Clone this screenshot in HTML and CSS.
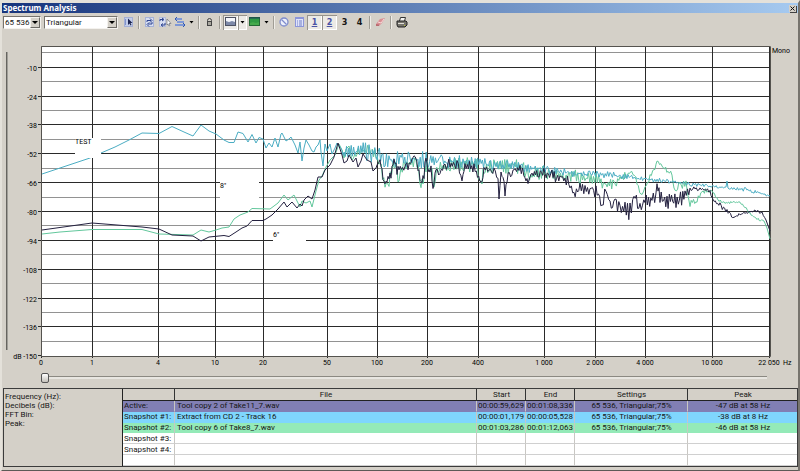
FILE: index.html
```html
<!DOCTYPE html>
<html lang="en">
<head>
<meta charset="utf-8">
<title>Spectrum Analysis</title>
<link rel="stylesheet" href="styles.css">
</head>
<body>
<main class="window">
  <header class="titlebar">
    <h1>Spectrum Analysis</h1>
    <button class="close" aria-label="Close"><svg viewBox="0 0 7 7"><path d="M1.5 1.5l4 4M5.5 1.5l-4 4"/></svg></button>
  </header>

  <div class="toolbar">
    <span class="combo combo-size">
      <select aria-label="FFT size"><option>65 536</option></select>
      <svg class="combo-arrow" viewBox="0 0 8 9"><path d="M1 3h6L4 6z"/></svg>
    </span>
    <span class="combo combo-window">
      <select aria-label="Smoothing window"><option>Triangular</option></select>
      <svg class="combo-arrow" viewBox="0 0 8 9"><path d="M1 3h6L4 6z"/></svg>
    </span>
    <button class="tool" aria-label="Settings"><svg viewBox="0 0 15 14"><rect x="3.5" y="2.5" width="8" height="9" fill="#c3cdea" stroke="#a3afd6"/><path d="M7 3.500v6.500l1.500-1.500 1 2 1-.5-1-2h2z" fill="#1b2450"/><path d="M4.500 4v6" stroke="#8093cc"/></svg></button>
    <span class="sep"></span>
    <button class="tool" aria-label="Refresh"><svg viewBox="0 0 15 14"><rect x="3.500" y="2.500" width="8" height="9" fill="#d7def2" stroke="#a6b2d8"/><path d="M5 7V5.500h4M8 3.500l2 2-2 2M10 7v2H6M7 7.500l-2 2 2 2" fill="none" stroke="#2c438f"/></svg></button>
    <button class="tool" aria-label="Refresh selection"><svg viewBox="0 0 15 14"><rect x="2.500" y="2.500" width="6" height="9" fill="#d7def2" stroke="#b4bddb"/><path d="M3 6V4.500h3M5 3l2 1.500L5 6M8 8v2H5M6 8.500L4 10l2 1.500" fill="none" stroke="#2c438f"/><path d="M10 4v6l1-1 1 2 1-.5-1-2h2z" fill="#fff" stroke="#59606f" stroke-width=".6"/></svg></button>
    <button class="tool" aria-label="Display range"><svg viewBox="0 0 15 14"><path d="M3 4h7M5 7h7M3 10h9" stroke="#7e98d6" stroke-width="2"/><path d="M5 2L3 4l2 2M11 8l2 2-2 2" fill="none" stroke="#2f56ad"/></svg></button>
    <button class="drop" aria-label="Display range options"><svg viewBox="0 0 9 14"><path d="M2.500 6h4l-2 2.500z"/></svg></button>
    <span class="sep"></span>
    <button class="tool" aria-label="Hold peaks"><svg viewBox="0 0 15 14"><path d="M5.500 7V5.500q0-2 2-2t2 2V7" fill="none" stroke="#444"/><rect x="5.500" y="6.500" width="4" height="4" fill="#a9a79f" stroke="#444"/></svg></button>
    <span class="sep"></span>
    <button class="tool pressed" aria-label="Line graph" aria-pressed="true"><svg viewBox="0 0 15 14"><rect x="2.500" y="2.500" width="10" height="8" fill="#f4f6fb" stroke="#4d5263"/><path d="M3 6l3 1 3-1 3 1v3H3z" fill="#7d89a8"/></svg></button>
    <button class="drop pressed" aria-label="Graph type"><svg viewBox="0 0 9 14"><path d="M2.500 6h4l-2 2.500z"/></svg></button>
    <button class="tool" aria-label="Spectrogram"><svg viewBox="0 0 15 14"><rect x="2.500" y="2.500" width="10" height="8" fill="#2f9a43" stroke="#236a35"/><path d="M2 3h11" stroke="#20405e"/><path d="M3 8l3-1 3 1 3-1v3H3z" fill="#45aa4c"/></svg></button>
    <button class="drop" aria-label="Spectrogram options"><svg viewBox="0 0 9 14"><path d="M2.500 6h4l-2 2.500z"/></svg></button>
    <span class="sep"></span>
    <button class="tool" aria-label="Disable snapshots"><svg viewBox="0 0 15 14"><circle cx="7" cy="7" r="4" fill="#edf0fb" stroke="#7e8ccc" stroke-width="1.300"/><path d="M4.500 4.500l5 5" stroke="#7e8ccc" stroke-width="1.300"/></svg></button>
    <button class="tool" aria-label="Snapshot list"><svg viewBox="0 0 15 14"><rect x="3.500" y="2.500" width="8" height="9" fill="#dfe3fb" stroke="#8c96da"/><path d="M3 3.500h9" stroke="#8c96da"/><path d="M5 6h1M5 8h1M5 10h1M7 6h3M7 8h3M7 10h3" stroke="#7280c5"/></svg></button>
    <button class="tool digit pressed" aria-pressed="true">1</button>
    <button class="tool digit pressed" aria-pressed="true">2</button>
    <button class="tool digit">3</button>
    <button class="tool digit">4</button>
    <span class="sep"></span>
    <button class="tool" aria-label="Clear"><svg viewBox="0 0 15 14"><path d="M3 9l4-5 5-1-3 5-3 3H3z" fill="#d98f94"/><path d="M5 7l3 1 3-4" fill="none" stroke="#f7dada"/><path d="M3 9l3 .5V11H3z" fill="#b96a70"/></svg></button>
    <span class="sep"></span>
    <button class="tool" aria-label="Print"><svg viewBox="0 0 15 14"><path d="M5.500 6l1-3.500h5L10.500 6" fill="#f5f5f2" stroke="#333"/><path d="M3 6h9l1 1v3l-2 2H4l-1-2z" fill="#77756e" stroke="#222"/><path d="M4 8.500h6" stroke="#e0ded6"/><path d="M10 10.500h1" stroke="#b8c235"/></svg></button>
  </div>

  <svg class="chart" viewBox="2 31 796 340" role="img" aria-label="Spectrum, level in dB against frequency in Hz">
    <rect class="groove-shade" x="6" y="52" width="1" height="298"/>
    <rect class="groove-light" x="7" y="52" width="1" height="298"/>
    <rect class="plot" x="41" y="46" width="730" height="310"/>
    <g id="grid"></g>
    <g id="series"></g>
    <g class="notes">
      <rect x="75" y="138" width="26" height="20"/><text x="75" y="144">TEST</text>
      <rect x="220" y="177" width="39" height="21"/><text x="220" y="188">8"</text>
      <rect x="273" y="230" width="33" height="14"/><text x="273" y="237">6"</text>
    </g>
    <g id="labels" class="labels"></g>
    <text class="channel" x="772" y="53">Mono</text>
  </svg>

  <div class="position"><input type="range" min="0" max="100" value="0" aria-label="Position"></div>

  <section class="details">
    <ul class="readout">
      <li>Frequency (Hz):</li>
      <li>Decibels (dB):</li>
      <li>FFT Bin:</li>
      <li>Peak:</li>
    </ul>
    <div class="snapshots">
      <table>
        <colgroup><col class="c-name"><col><col class="c-time"><col class="c-time"><col class="c-settings"><col class="c-peak"></colgroup>
        <thead><tr><th></th><th>File</th><th>Start</th><th>End</th><th>Settings</th><th>Peak</th></tr></thead>
        <tbody>
          <tr class="active"><td>Active:</td><td>Tool copy 2 of Take11_7.wav</td><td>00:00:59,629</td><td>00:01:08,336</td><td>65 536, Triangular;75%</td><td>-47 dB at 58 Hz</td></tr>
          <tr class="snap1"><td>Snapshot #1:</td><td>Extract from CD 2 - Track 16</td><td>00:00:01,179</td><td>00:00:05,528</td><td>65 536, Triangular;75%</td><td>-38 dB at 8 Hz</td></tr>
          <tr class="snap2"><td>Snapshot #2:</td><td>Tool copy 6 of Take8_7.wav</td><td>00:01:03,286</td><td>00:01:12,063</td><td>65 536, Triangular;75%</td><td>-46 dB at 58 Hz</td></tr>
          <tr><td>Snapshot #3:</td><td></td><td></td><td></td><td></td><td></td></tr>
          <tr><td>Snapshot #4:</td><td></td><td></td><td></td><td></td><td></td></tr>
          <tr><td></td><td></td><td></td><td></td><td></td><td></td></tr>
        </tbody>
      </table>
    </div>
  </section>
</main>
<script src="chart.js"></script>
</body>
</html>
```
FILE: styles.css
```css
* { box-sizing: border-box; }

body {
  margin: 0;
  background: #d4d0c8;
  color: #161616;
  font: 8px/9px Roboto, "Liberation Sans", sans-serif;
}

button, select, input { font: inherit; color: inherit; margin: 0; }

.window {
  border-top: 3px solid #e4e1da;
  border-left: 2px solid #e4e1da;
  border-right: 2px solid #77746e;
  border-bottom: 2px solid #5c5a56;
}

.titlebar {
  display: flex;
  align-items: center;
  justify-content: space-between;
  height: 10px;
  padding: 0 2px 0 1px;
  background: linear-gradient(90deg, #16347c, #a6caf0);
}

h1 { margin: 0; font: bold 8px/10px "Noto Sans", "Liberation Sans", sans-serif; color: #fff; }

.close {
  width: 7px;
  height: 7px;
  padding: 0;
  border: 0;
  background: #d4d0c8;
  box-shadow: 1px 1px 0 #404040;
}
.close svg { display: block; stroke: #111; }

.toolbar { display: flex; align-items: center; height: 18px; padding-left: 1px; }

.combo {
  position: relative;
  height: 13px;
  border: 1px solid;
  border-color: #77746e #f4f2ee #f4f2ee #77746e;
  background: #fff;
}
.combo-size { width: 38px; margin-right: 3px; }
.combo-window { width: 74px; margin-right: 3px; }
.combo select {
  display: block;
  appearance: none;
  width: 100%;
  height: 11px;
  padding: 0 0 0 1px;
  border: 0;
  background: none;
}
.combo-arrow {
  position: absolute;
  top: 0;
  right: 0;
  width: 10px;
  height: 11px;
  background: #d4d0c8;
  border: 1px solid;
  border-color: #f4f2ee #6c6a65 #6c6a65 #f4f2ee;
  pointer-events: none;
}

.tool, .drop { width: 15px; height: 15px; padding: 0; border: 0; background: none; }
.drop { width: 9px; }
.tool svg, .drop svg { display: block; width: 100%; height: 14px; }
.pressed {
  background: #eceae6;
  box-shadow: inset 1px 1px 0 #96938c, inset -1px -1px 0 #fff;
}
.digit { font: bold 9px/14px "DejaVu Sans Condensed", "Liberation Sans", sans-serif; }
.digit.pressed { color: #4b53a5; text-decoration: underline; }
.sep { width: 2px; height: 13px; margin: 0 2px; border-left: 1px solid #a09d95; border-right: 1px solid #efede8; }

.chart { display: block; width: 100%; height: auto; }
.groove-shade { fill: #66645f; }
.groove-light { fill: #a09e98; }
.plot { fill: #fff; }
.major { stroke: #2a2a2a; }
.minor { stroke: #929292; }
.frame { stroke: #55534f; }
.series { fill: none; stroke-width: 1; stroke-linejoin: round; }
.series-snap1 { stroke: #4badc3; }
.series-snap2 { stroke: #62c79c; }
.series-active { stroke: #242140; }
.notes rect { fill: #fff; }
.notes text, .labels text, .channel { font-size: 7px; }

.position { display: flex; height: 12px; padding: 0 31px 0 39px; }
.position input { appearance: none; width: 100%; height: 12px; background: none; }
.position input::-webkit-slider-runnable-track {
  height: 3px;
  background: #e8e6e1;
  border-top: 1px solid #8b8982;
}
.position input::-webkit-slider-thumb {
  appearance: none;
  width: 8px;
  height: 10px;
  margin-top: -4px;
  border: 1px solid #555;
  border-radius: 2px;
  background: linear-gradient(#fff, #c4c1ba);
}

.details { display: flex; height: 79px; margin: 5px 0 3px 1px; border: 1px solid #3b3b3b; }
.readout { flex: none; width: 119px; margin: 0; padding: 3px 1px; list-style: none; border-right: 1px solid #222; }
.snapshots { flex: 1; min-width: 0; }

table { width: 100%; height: 77px; table-layout: fixed; border-collapse: separate; border-spacing: 0; background: #fff; }
.c-name { width: 52px; }
.c-time { width: 49px; }
.c-settings { width: 113px; }
.c-peak { width: 109px; }
th, td { padding: 0 0 0 1px; overflow: hidden; white-space: nowrap; line-height: 9px; }
thead tr { height: 12px; }
tbody tr { height: 10px; }
th {
  background: #d4d0c8;
  font-weight: normal;
  border-right: 1px solid #333;
  border-bottom: 1px solid #222;
}
th:last-child, td:last-child { border-right: 0; }
td { border-right: 1px solid #c9c7c3; border-bottom: 1px solid #d0d0d0; text-align: left; }
td:nth-child(2) { padding-left: 2px; }
td:nth-child(n+5) { text-align: center; }
.active td { background: #817fb4; border-bottom-color: #817fb4; }
.snap1 td { background: #7fd6fd; border-bottom-color: #7fd6fd; }
.snap2 td { background: #94eab8; border-bottom-color: #94eab8; }
```
FILE: chart.js
```js
const NS = "http://www.w3.org/2000/svg";

function add(parent, tag, attrs, text) {
  const el = document.createElementNS(NS, tag);
  for (const key in attrs) el.setAttribute(key, attrs[key]);
  if (text) el.textContent = text;
  parent.appendChild(el);
}

const grid = document.getElementById("grid");
const labels = document.getElementById("labels");
const LEFT = 41.5, RIGHT = 770.5, TOP = 46.5, BOTTOM = 356.5;

const ticks = [["0", 41], ["1", 92], ["4", 158], ["10", 215], ["20", 263], ["50", 327], ["100", 377],
  ["200", 427], ["400", 478], ["1 000", 544], ["2 000", 595], ["4 000", 645], ["10 000", 712], ["22 050", 769]];

for (let i = -1; i <= 20; i++) {
  const y = Math.floor(67.3 + i * 14.42) + 0.5;
  if (i < 20) add(grid, "line", { x1: LEFT, x2: RIGHT, y1: y, y2: y, class: i % 2 ? "minor" : "major" });
  if (i % 2 === 0) {
    add(labels, "text", { x: 37, y: y + 3, "text-anchor": "end" }, (i === 20 ? "dB " : "") + (-10 - i * 7));
    add(grid, "line", { x1: 38, x2: 41, y1: y, y2: y, class: "major" });
  }
}
for (const [name, x] of ticks) {
  add(grid, "line", { x1: x + 0.5, x2: x + 0.5, y1: TOP, y2: 358, class: "major" });
  add(labels, "text", { x: x, y: 365, "text-anchor": "middle" }, name);
}
add(labels, "text", { x: 783, y: 365 }, "Hz");
add(grid, "path", { d: `M${LEFT} ${TOP}H${RIGHT}V${BOTTOM}H${LEFT}Z`, class: "frame", fill: "none" });

// Each entry is x, level, and from the third value on the ripple around that level.
const curves = {
  snap2: [[42,234],[60,232],[92,229.5],[142,229.5],[159,234],[193,235],[201,230],[209,232],[216,230],[222,228],[229,227],
    [234,219],[240,215],[248,212],[252,208.5],[270,209],[278,203],[284,195],[288,200],[294,195],[300,207],[302,201],[306,203],
    [310,201],[312,207],[316,191],[319,180],[322,176],[326,167],[330,160],[335,155],[339,144],[342,150],[344,158],[346,149],
    [349,146],[352,160],[356,152,4],[364,153,5],[370,150,5],[376,157,6],[380,163,5],[385,187,3],[389,183,5],[393,165,5],
    [396,162,5],[398,184,4],[401,168,5],[406,164,5],[412,163,6],[417,163,5],[421,185,4],[424,176,5],[427,164,5],[431,170,6],
    [434,184,4],[438,167,5],[460,165,6],[477,165,7],[481,186,4],[484,167,6],[500,165,7],[520,166,7],[532,176,7],[545,172,6],
    [565,176,7],[580,179,7],[596,180,6],[606,185,5],[614,184,5],[620,179,4],[626,174,4],[633,172,3],[637,184,3],[641,195,4],
    [645,188,4],[650,178,3],[654,170,3],[657,161,1],[662,165,2],[668,172,2],[672,174,2],[674,190,3],[680,185,4],[686,184,3],
    [690,203,3],[697,200,3],[702,192,2],[708,190,2],[713,192,1],[718,200,1],[725,203,1],[740,202,1],[745,207,1],[750,214,1],
    [757,219,1],[764,221,1],[767,228],[770,239]],
  snap1: [[42,174],[60,168],[90,158],[101,153],[115,147],[129,140],[142,133],[159,133.5],[172,126.5],[184,132],[193,136],
    [201,125],[209,131],[216,134],[224,140],[229,142.5],[234,142.5],[238,132],[243,133.5],[248,142],[252,134.5],[256,143],
    [259,137.5],[263,139],[266,148],[269,143],[272,147],[275,138],[278,147],[281,134],[282,133],[286,141],[289,139],
    [291,137],[295,145],[298,153],[300,142],[302,161],[304,148],[306,140],[309,145],[312,151],[314,152],[316,147],[318,145],
    [320,140],[321,152],[323,166],[325,144],[327,151],[330,144],[332,154],[335,148],[337,143],[340,147],[343,154,3],
    [350,149,6],[362,151,7],[376,154,9],[384,161,8],[400,158,7],[425,160,7],[440,161,6],[480,163,5],[510,166,4],[545,170,4],
    [580,174,3],[610,175,3],[645,179,2],[680,183,2],[710,186,1],[726,188,1],[727,181],[728,188,1],[748,190,2],[760,193,1],[770,196,1]],
  active: [[42,230],[92,223],[142,227],[159,229],[172,235],[193,236],[201,241],[209,237],[224,235.5],[229,236.5],[236,232],
    [242,228],[247,226],[252,220.5],[263,220.5],[266,219],[272,215],[278,209],[284,202],[287,207],[292,202],[297,208],
    [300,204],[302,206],[304,200],[308,196],[312,199],[315,190],[318,177],[322,177],[325,170],[330,165],[334,157],[338,143],
    [342,155],[344,163],[347,161],[349,155],[353,162],[356,158],[358,167],[361,161],[363,154],[367,160],[371,162],[373,171],
    [376,168],[380,160,3],[382,172,3],[384,184,3],[386,180,3],[388,177,4],[391,175,4],[394,160,3],[397,170,4],[399,168,2],
    [405,168,2],[408,166,5],[412,160,4],[414,155,2],[418,168,3],[421,182,3],[424,174,4],[426,156,2],[428,170,4],[431,169,3],
    [433,189,1],[436,168,3],[440,175,3],[445,164,5],[450,164,4],[457,165,5],[462,179,2],[465,166,4],[474,167,5],[481,182,4],
    [484,169,4],[494,170,4],[498,180,2],[499,199],[501,174,2],[504,181,2],[505,196],[507,178,4],[513,171,3],[520,167,4],
    [525,178,4],[528,183,6],[532,175,4],[545,173,5],[560,178,5],[570,183,5],[574,193,5],[580,189,5],[590,190,4],[596,193,6],
    [602,202,6],[606,191,5],[610,204,5],[615,203,8],[620,212,8],[625,203,8],[630,212,9],[634,200,6],[640,205,6],[645,199,6],
    [652,200,6],[656,196,4],[657,184,2],[660,196,6],[667,202,7],[676,200,7],[685,197,6],[690,190,2],[700,188,2],[710,192,2],
    [713,200,1],[720,205,2],[727,212,3],[734,217,2],[745,213,1],[755,211,1],[762,213,1],[766,220],[770,231]]
};

let seed = 20;
function random() {
  seed = (seed * 1103515245 + 12345) % 2147483648;
  return seed / 2147483648;
}

for (const name in curves) {
  const points = curves[name];
  let d = "M" + points[0][0] + " " + points[0][1];
  let side = 1;
  for (let i = 1; i < points.length; i++) {
    const [x0, y0, a0 = 0] = points[i - 1];
    const [x1, y1, a1 = 0] = points[i];
    const steps = a0 || a1 ? Math.max(1, Math.round((x1 - x0) / 1.2)) : 1;
    for (let s = 1; s <= steps; s++) {
      const t = s / steps;
      side = random() < 0.75 ? -side : side;
      const y = y0 + (y1 - y0) * t + side * random() * 1.2 * (a0 + (a1 - a0) * t);
      d += "L" + (x0 + (x1 - x0) * t).toFixed(1) + " " + y.toFixed(1);
    }
  }
  add(document.getElementById("series"), "path", { d, class: "series series-" + name });
}
```
